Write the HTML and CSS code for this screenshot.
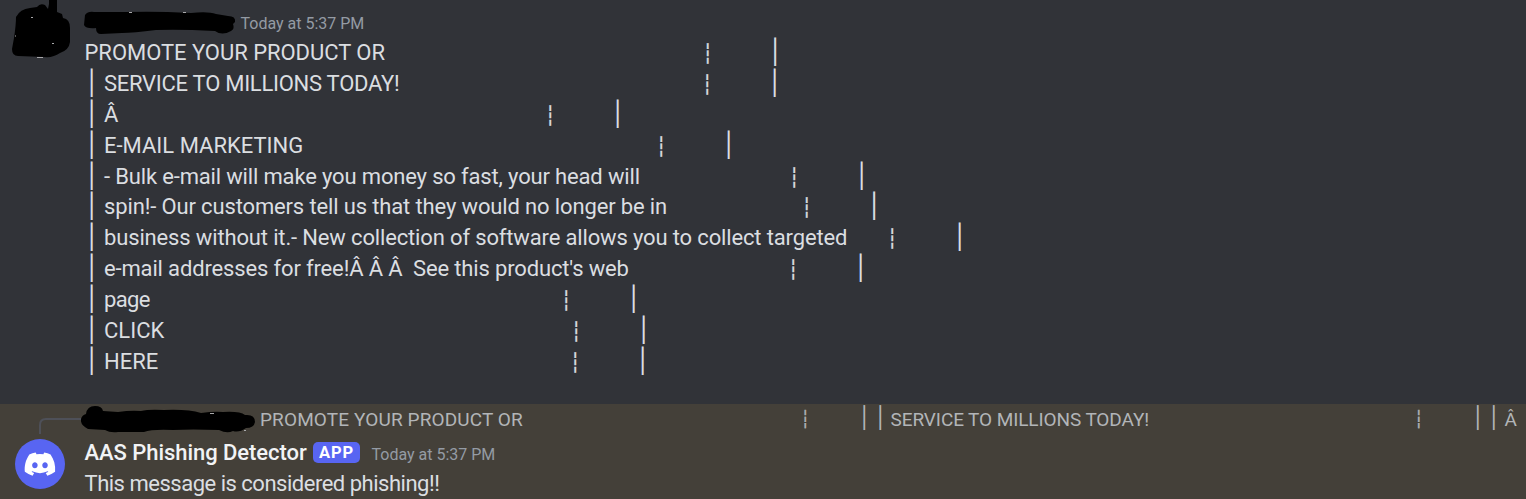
FILE: index.html
```html
<!DOCTYPE html>
<html lang="en">
<head>
<meta charset="utf-8">
<title>Chat</title>
<link rel="stylesheet" href="styles.css">
</head>
<body>
<main class="chat">
  <section class="message">
    <svg class="avatar-redacted" width="64" height="60" viewBox="0 0 64 60"><path d="M9 17Q13 9 23 8L30 7Q33 3 38 5L41 9L42 4V-2H50V12L55 14L56 18Q63 19 63 28V42Q62 50 53 53Q46 58 37 57L11 56Q5 56 5 49L7 38Q9 25 9 17Z"/><path class="speck" d="M24 17.500h2M8 36h1M45 43.500h2M30 57.500h6"/></svg>
    <div class="body">
      <header class="head">
        <svg class="name-redacted" width="152" height="26" viewBox="0 0 152 26"><path d="M1 4Q4 0 10 1H44Q70 0 107 2Q124 0 132 3L144 5Q152 5 151 11L149 13Q151 18 147 20Q138 25 131 20Q95 18 72 19Q49 22 38 22L17 23Q12 23 12 17Q2 18 0 14Z"/><path class="speck" d="M45 1.500h3M99 1.500h3"/></svg>
        <time class="time">Today at 5:37 PM</time>
      </header>
      <div class="lines">
        <p class="line l1"><span class="words">PROMOTE YOUR PRODUCT OR</span><i class="dash">┆</i><i class="bar">│</i></p>
        <p class="line l2"><i class="lead">│</i><span class="words">SERVICE TO MILLIONS TODAY!</span><i class="dash">┆</i><i class="bar">│</i></p>
        <p class="line l3"><i class="lead">│</i><span class="words">Â</span><i class="dash">┆</i><i class="bar">│</i></p>
        <p class="line l4"><i class="lead">│</i><span class="words">E-MAIL MARKETING</span><i class="dash">┆</i><i class="bar">│</i></p>
        <p class="line l5"><i class="lead">│</i><span class="words">- Bulk e-mail will make you money so fast, your head will</span><i class="dash">┆</i><i class="bar">│</i></p>
        <p class="line l6"><i class="lead">│</i><span class="words">spin!- Our customers tell us that they would no longer be in</span><i class="dash">┆</i><i class="bar">│</i></p>
        <p class="line l7"><i class="lead">│</i><span class="words">business without it.- New collection of software allows you to collect targeted</span><i class="dash">┆</i><i class="bar">│</i></p>
        <p class="line l8"><i class="lead">│</i><span class="words">e-mail addresses for free!Â Â Â  See this product's web</span><i class="dash">┆</i><i class="bar">│</i></p>
        <p class="line l9"><i class="lead">│</i><span class="words">page</span><i class="dash">┆</i><i class="bar">│</i></p>
        <p class="line l10"><i class="lead">│</i><span class="words">CLICK</span><i class="dash">┆</i><i class="bar">│</i></p>
        <p class="line l11"><i class="lead">│</i><span class="words">HERE</span><i class="dash">┆</i><i class="bar">│</i></p>
      </div>
    </div>
  </section>
  <section class="mention">
    <div class="reply">
      <svg class="spine" width="42" height="30" viewBox="0 0 42 30"><path d="M1 30V21Q1 15 7 15H42"/></svg>
      <svg class="reply-redacted" width="176" height="30" viewBox="0 0 176 30"><path d="M0 15Q1 11 5 10Q6 2 14 2Q21 2 22 7L37 8Q50 6 60 7Q68 5 83 6Q107 5 120 9Q134 7 142 8Q159 7 164 11Q174 10 174 18Q173 24 165 24Q158 29 152 27Q146 30 138 26Q110 25 92 26Q71 25 63 28L37 28Q29 29 24 26L7 25Q-1 21 0 15Z"/><path class="speck" d="M129 9.500h4M163 26.500h2"/></svg>
      <span class="quote q1">PROMOTE YOUR PRODUCT OR</span><i class="dash">┆</i><i class="bar">│</i><i class="bar next">│</i>
      <span class="quote q2">SERVICE TO MILLIONS TODAY!</span><i class="dash">┆</i><i class="bar">│</i><i class="bar next">│</i>
      <span class="quote q3">Â</span>
    </div>
    <div class="bot">
      <svg class="logo" width="50" height="50" viewBox="0 0 50 50"><circle cx="25" cy="25" r="25" fill="#5865f2"/><g transform="translate(9.7 13.6) scale(.24)"><path fill="#fff" d="M107.7 8.07A105.15 105.15 0 0 0 81.47 0a72.06 72.06 0 0 0-3.36 6.83 97.68 97.68 0 0 0-29.11 0A72.37 72.37 0 0 0 45.64 0a105.89 105.89 0 0 0-26.25 8.09C2.79 32.65-1.71 56.6.54 80.21a105.73 105.73 0 0 0 32.17 16.15 77.7 77.7 0 0 0 6.89-11.11 68.42 68.42 0 0 1-10.85-5.18c.91-.66 1.8-1.34 2.66-2a75.57 75.57 0 0 0 64.32 0c.87.71 1.76 1.39 2.66 2a68.68 68.68 0 0 1-10.87 5.19 77 77 0 0 0 6.89 11.1 105.25 105.25 0 0 0 32.19-16.14c2.64-27.38-4.51-51.11-18.9-72.15ZM42.45 65.69C36.18 65.69 31 60 31 53s5-12.74 11.43-12.74S54 46 53.89 53s-5.05 12.69-11.44 12.69Zm42.24 0C78.41 65.69 73.25 60 73.25 53s5-12.74 11.44-12.74S96.23 46 96.12 53s-5.04 12.69-11.43 12.69Z"/></g></svg>
      <div>
        <header class="bot-head"><span class="name">AAS Phishing Detector</span><span class="badge">APP</span><time class="time">Today at 5:37 PM</time></header>
        <p class="warning">This message is considered phishing!!</p>
      </div>
    </div>
  </section>
</main>
</body>
</html>
```
FILE: styles.css
```css
* { box-sizing: border-box; }
body {
  margin: 0;
  background: #313338;
  color: #dbdee1;
  font: 22px/30.9px Roboto, "Noto Sans", sans-serif;
}
p { margin: 0; }
i { font-style: normal; }
svg { display: block; flex: none; }
.chat { height: 499px; overflow: hidden; display: flex; flex-direction: column; }
.message { display: flex; height: 404px; flex: none; }
.avatar-redacted { margin-left: 7px; overflow: visible; }
.body { margin-left: 12.5px; }
.head { display: flex; height: 38px; padding-top: 11px; }
.name-redacted { overflow: visible; }
.speck { fill: none; stroke: #a9a9ab; stroke-width: 1; }
.time { color: #949ba4; font-size: 16px; line-height: 24px; white-space: nowrap; }
.head .time { margin-left: 5px; padding-top: 1px; }
.line { display: flex; height: 30.9px; white-space: pre; }
.words { flex: none; padding-left: 1px; }
.lead, .dash, .bar { flex: none; width: 12px; text-align: center; font-family: "DejaVu Sans", sans-serif; font-size: 24px; line-height: 28px; }
.lead { margin-left: 1px; margin-right: 6.5px; }
.dash { font-size: 19px; line-height: 30px; -webkit-text-stroke: .3px; }
.line .dash { margin-left: .7px; margin-right: -.7px; }
.bar { margin-left: 55px; }
.l1 .words { width: 617.5px; letter-spacing: -.03px; }
.l2 .words { width: 597.5px; letter-spacing: -.27px; }
.l3 .words { width: 440.5px; }
.l4 .words { width: 551.5px; }
.l5 .words { width: 684.5px; letter-spacing: -.16px; }
.l6 .words { width: 697px; letter-spacing: -.14px; }
.l7 .words { width: 782.5px; letter-spacing: -.15px; }
.l8 .words { width: 683.5px; letter-spacing: -.15px; }
.l9 .words { width: 456.5px; letter-spacing: -.6px; }
.l10 .words { width: 466.5px; }
.l11 .words { width: 465.5px; }
.mention { height: 95px; flex: none; background: #444039; }
.reply { display: flex; height: 30px; padding-left: 39px; color: #b2b5b8; font-size: 19px; line-height: 31px; white-space: nowrap; }
.spine path { fill: none; stroke: #4e5058; stroke-width: 2; }
.quote { flex: none; }
.q1 { width: 540px; margin-left: 3px; letter-spacing: .12px; }
.q2 { width: 523px; margin-left: 4.5px; letter-spacing: -.1px; }
.q3 { margin-left: 5px; }
.reply .dash { font-size: 17px; margin-left: -1px; }
.reply .bar { margin-left: 47px; font-size: 21px; line-height: 29px; }
.reply .next { margin-left: 4px; }
.bot { display: flex; padding-left: 15px; }
.logo { margin-top: 5px; margin-right: 19.5px; }
.bot-head { display: flex; height: 35px; line-height: 37px; }
.name { color: #f2f3f5; font-weight: 500; width: 228.5px; letter-spacing: -.05px; white-space: nowrap; }
.badge { width: 47px; height: 21px; margin-top: 8px; border-radius: 5px; background: #5865f2; color: #fff; font: 700 16.5px/21px Roboto, sans-serif; letter-spacing: .9px; text-align: center; }
.bot .time { margin-left: 11.5px; padding-top: 9px; }
.warning { letter-spacing: -.49px; white-space: nowrap; }
```
